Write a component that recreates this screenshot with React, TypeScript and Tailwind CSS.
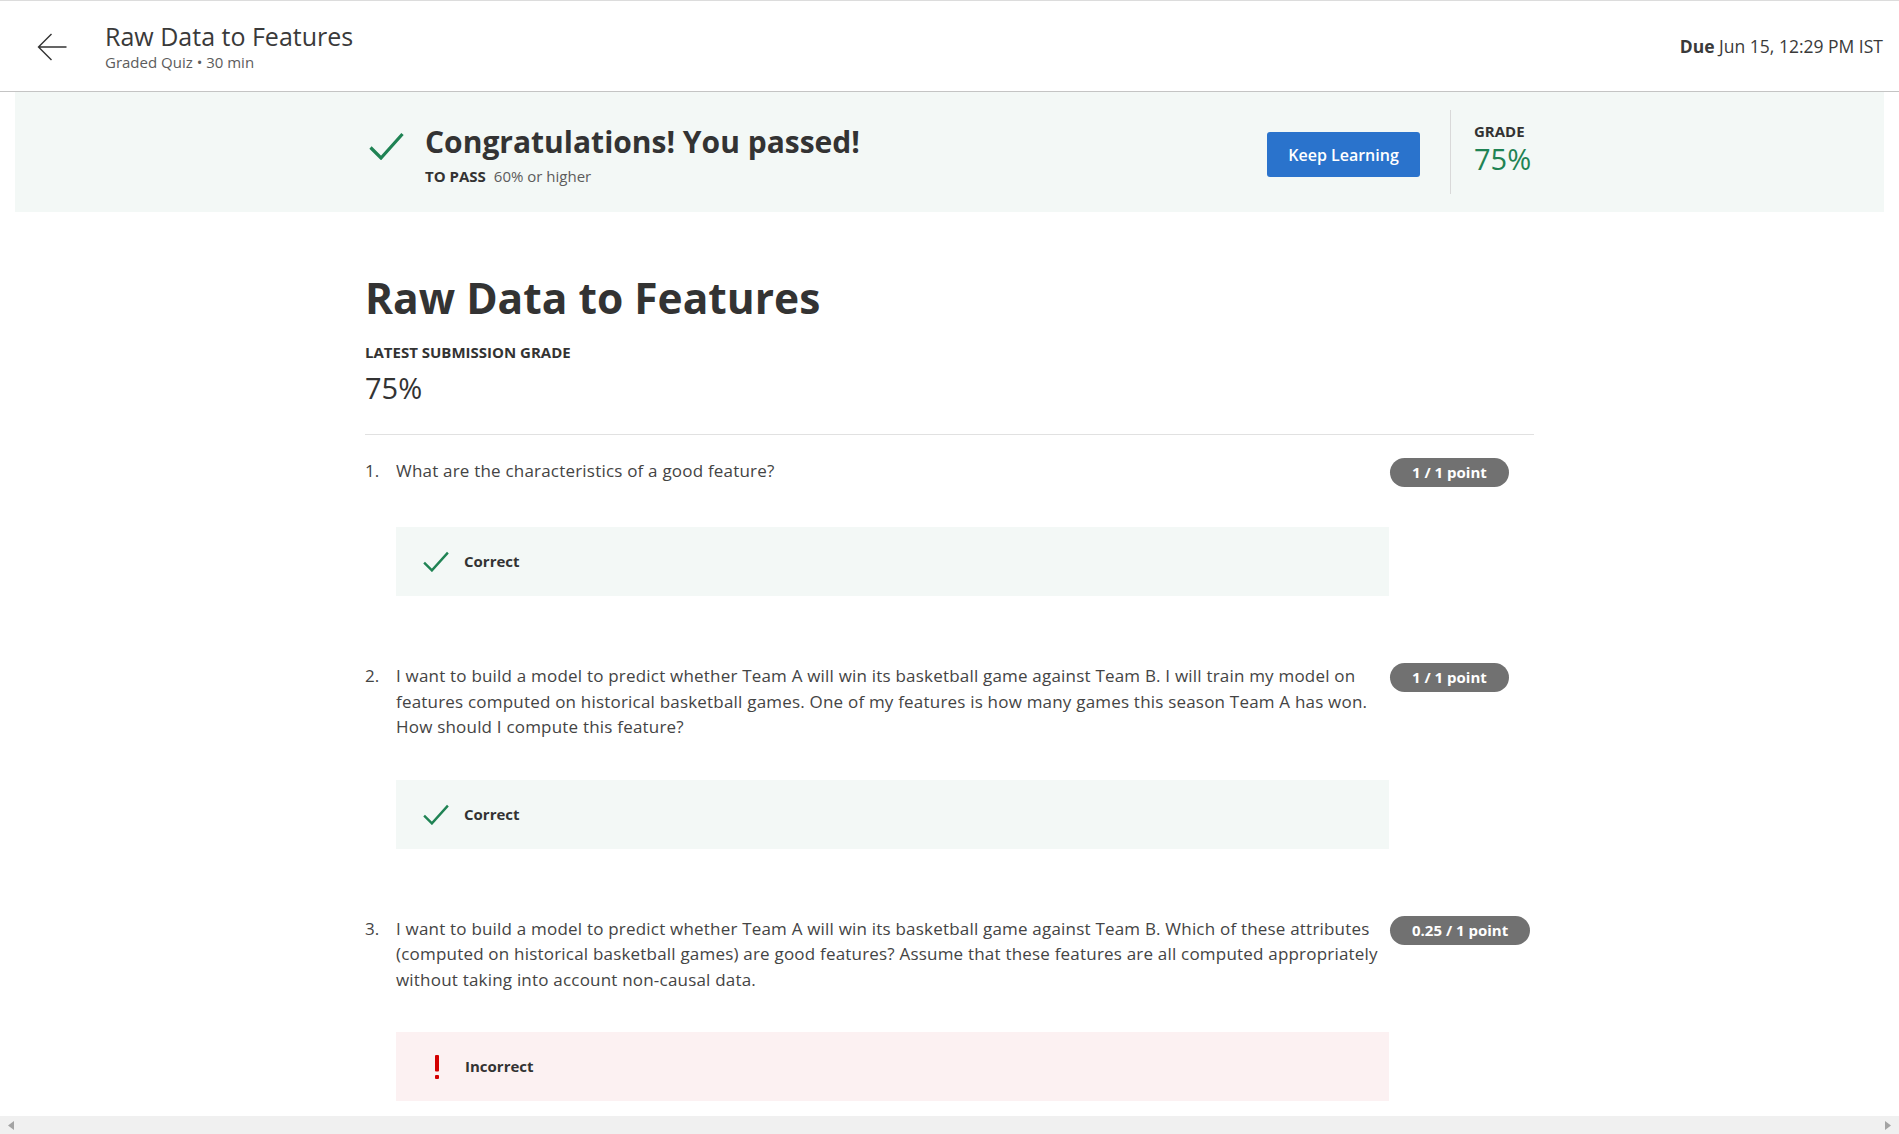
import React from "react";

type Question = {
  n: number;
  lines: string[];
  score: string;
  correct: boolean;
};

const questions: Question[] = [
  {
    n: 1,
    lines: ["What are the characteristics of a good feature?"],
    score: "1 / 1 point",
    correct: true,
  },
  {
    n: 2,
    lines: [
      "I want to build a model to predict whether Team A will win its basketball game against Team B. I will train my model on",
      "features computed on historical basketball games. One of my features is how many games this season Team A has won.",
      "How should I compute this feature?",
    ],
    score: "1 / 1 point",
    correct: true,
  },
  {
    n: 3,
    lines: [
      "I want to build a model to predict whether Team A will win its basketball game against Team B. Which of these attributes",
      "(computed on historical basketball games) are good features? Assume that these features are all computed appropriately",
      "without taking into account non-causal data.",
    ],
    score: "0.25 / 1 point",
    correct: false,
  },
];

function CheckIcon({ className }: { className?: string }) {
  return (
    <svg viewBox="0 0 35 28" className={className} fill="none">
      <path
        d="M1.5 15.5 L12 26 L33.5 2"
        stroke="#1f8354"
        strokeWidth="3.2"
        strokeLinejoin="miter"
      />
    </svg>
  );
}

function BangIcon() {
  return (
    <svg viewBox="0 0 6 24" className="w-[6px] h-[24px]">
      <rect x="1" y="0" width="4" height="16.5" rx="1" fill="#d30001" />
      <rect x="1" y="20" width="4" height="4" rx="1" fill="#d30001" />
    </svg>
  );
}

function Feedback({ correct }: { correct: boolean }) {
  return (
    <div
      className={`mt-[40px] h-[69px] w-[993px] flex items-center ${
        correct ? "bg-[#f3f8f6] pl-[27px]" : "bg-[#fcf1f2] pl-[38px]"
      }`}
    >
      {correct ? (
        <CheckIcon className="w-[26px] h-[21px]" />
      ) : (
        <BangIcon />
      )}
      <span
        className={`text-[15px] font-bold text-[#333] ${
          correct ? "ml-[15px]" : "ml-[25px]"
        }`}
      >
        {correct ? "Correct" : "Incorrect"}
      </span>
    </div>
  );
}

export default function App() {
  return (
    <div className="h-screen flex flex-col overflow-hidden bg-white font-['Open_Sans',sans-serif] text-[#333]">
      <div className="flex-1 overflow-hidden">
        {/* Top bar */}
        <header className="h-[92px] border-t border-b border-t-[#dcdcdc] border-b-[#c4c4c4] flex items-center pr-[16px]">
          <button className="ml-[37px] w-[30px] h-[30px] mt-[1px]">
            <svg viewBox="0 0 30 30" className="w-[30px] h-[30px]" fill="none">
              <path
                d="M29.5 15 H1.5 M14.5 2 L1.5 15 L14.5 28"
                stroke="#333"
                strokeWidth="1.4"
              />
            </svg>
          </button>
          <div className="ml-[38px] flex flex-col">
            <span className="text-[25px] leading-[32px] text-[#3a3a3a]">
              Raw Data to Features
            </span>
            <span className="text-[15px] leading-[20px] text-[#5c5c5c]">
              Graded Quiz • 30 min
            </span>
          </div>
          <div className="ml-auto text-[17.5px] text-[#3a3a3a]">
            <span className="font-bold">Due</span> Jun 15, 12:29 PM IST
          </div>
        </header>

        {/* Pass banner */}
        <div className="mx-[15px] h-[120px] bg-[#f3f8f6] py-[18px]">
          <div className="w-[1169px] mx-auto h-full flex items-center justify-between">
            <div className="flex items-start">
              <CheckIcon className="ml-[4px] mt-[13px] w-[35px] h-[28px]" />
              <div className="ml-[21px] flex flex-col pt-[4px]">
                <span className="text-[30px] leading-[38px] font-bold text-[#333]">
                  Congratulations! You passed!
                </span>
                <div className="mt-[5px] text-[15px] leading-[20px]">
                  <span className="font-bold text-[#333]">TO PASS</span>
                  <span className="ml-[8px] text-[#5c5c5c]">60% or higher</span>
                </div>
              </div>
            </div>
            <div className="flex items-stretch h-full">
              <div className="flex items-center mt-[5px]">
                <button className="h-[45px] w-[153px] rounded-[3px] bg-[#2a73cc] text-white text-[16px] font-semibold">
                  Keep Learning
                </button>
              </div>
              <div className="ml-[30px] w-px bg-[#d9d9d9]" />
              <div className="ml-[23px] pt-[11px] flex flex-col w-[60px]">
                <span className="text-[15px] leading-[20px] font-bold text-[#333]">
                  GRADE
                </span>
                <span className="text-[29px] leading-[36px] text-[#1f8354]">
                  75%
                </span>
              </div>
            </div>
          </div>
        </div>

        {/* Main */}
        <main className="w-[1169px] mx-auto pt-[60px]">
          <h1 className="text-[42.5px] leading-[52px] font-bold text-[#333]">
            Raw Data to Features
          </h1>
          <div className="mt-[18px] text-[15px] leading-[20px] font-bold text-[#333]">
            LATEST SUBMISSION GRADE
          </div>
          <div className="mt-[8px] text-[29px] leading-[36px] text-[#333]">
            75%
          </div>
          <div className="mt-[28px] h-px bg-[#e1e1e1]" />

          <div className="pt-[23px] flex flex-col gap-[67px]">
            {questions.map((q) => (
              <div key={q.n} className="flex">
                <div className="w-[31px] text-[17px] leading-[25.5px] text-[#444]">
                  {q.n}.
                </div>
                <div className="flex flex-col">
                  <div className="flex">
                    <div className="w-[993px] text-[17px] leading-[25.5px] tracking-[0.2px] text-[#444]">
                      {q.lines.map((l, i) => (
                        <span key={i} className="block whitespace-nowrap">
                          {l}
                        </span>
                      ))}
                    </div>
                    <div className="ml-[1px]">
                      <span className="inline-flex items-center h-[29px] px-[22px] rounded-full bg-[#717171] text-white text-[15px] font-bold whitespace-nowrap">
                        {q.score}
                      </span>
                    </div>
                  </div>
                  <Feedback correct={q.correct} />
                </div>
              </div>
            ))}
          </div>
        </main>
      </div>

      {/* horizontal scrollbar */}
      <div className="h-[18px] bg-[#f0f0f0] flex items-center justify-between px-[8px]">
        <svg viewBox="0 0 6 9" className="w-[6px] h-[9px]">
          <path d="M6 0 L0 4.5 L6 9 Z" fill="#a3a3a3" />
        </svg>
        <svg viewBox="0 0 6 9" className="w-[6px] h-[9px]">
          <path d="M0 0 L6 4.5 L0 9 Z" fill="#a3a3a3" />
        </svg>
      </div>
    </div>
  );
}
